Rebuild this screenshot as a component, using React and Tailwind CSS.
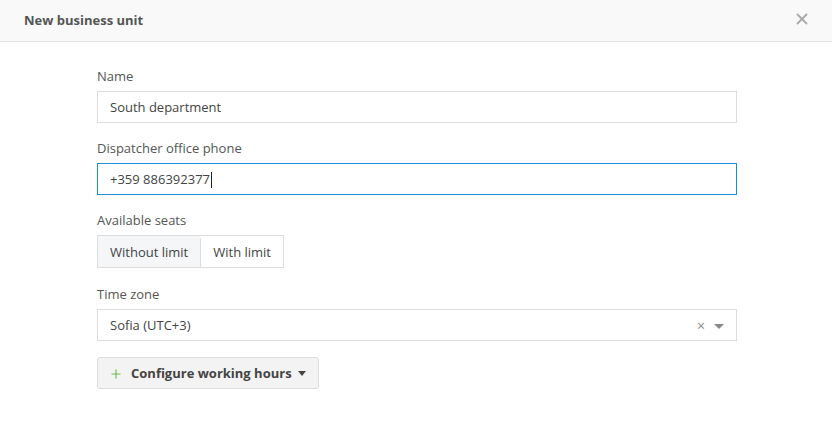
import { X, Plus } from 'lucide-react'

const font = { fontFamily: '"Open Sans", "Liberation Sans", sans-serif' }

function Label({ children }) {
  return <div className="mb-[6px] h-[18px] text-[13px] leading-[18px] text-[#555]">{children}</div>
}

export default function App() {
  return (
    <div className="h-[421px] w-[832px] bg-white" style={font}>
      <div className="flex h-[42px] items-center justify-between border-b border-[#e3e3e3] bg-[#f9f9f9] pl-[24px] pr-[21px]">
        <h1 className="text-[13px] font-bold text-[#555]">New business unit</h1>
        <X size={18} strokeWidth={2.4} className="-mt-[4px] text-[#aaa]" />
      </div>

      <div className="ml-[97px] w-[640px] pt-[25px]">
        <div className="mb-[16px]">
          <Label>Name</Label>
          <div className="flex h-[32px] items-center border border-[#ddd] px-[12px] pt-[2px] text-[13px] text-[#444]">
            South department
          </div>
        </div>

        <div className="mb-[16px]">
          <Label>Dispatcher office phone</Label>
          <div className="flex h-[32px] items-center border border-[#1b8ddb] px-[12px] pt-[2px] text-[13px] text-[#444]">
            +359 886392377
            <span className="ml-[1px] inline-block h-[16px] w-px bg-[#222]" />
          </div>
        </div>

        <div className="mb-[17px]">
          <Label>Available seats</Label>
          <div className="flex h-[33px] w-fit border border-[#ddd] pt-[2px] text-[13px] text-[#444]">
            <div className="-mt-[2px] flex items-center bg-[#f4f6f8] px-[12px] pt-[2px]">Without limit</div>
            <div className="flex items-center border-l border-[#ddd] px-[12px]">With limit</div>
          </div>
        </div>

        <div className="mb-[16px]">
          <Label>Time zone</Label>
          <div className="flex h-[32px] items-center justify-between border border-[#ddd] pl-[12px] pr-[12px] pt-[2px] text-[13px] text-[#444]">
            <span>Sofia (UTC+3)</span>
            <div className="flex items-center gap-[9px] text-[#888]">
              <span className="text-[14px] leading-none">×</span>
              <span className="h-0 w-0 border-x-[5px] border-t-[5px] border-x-transparent border-t-[#888]" />
            </div>
          </div>
        </div>

        <button className="flex h-[32px] items-center rounded-[3px] border border-[#ddd] bg-[#f3f3f3] pl-[11px] pr-[12px] pt-[1px] text-[13px] font-bold text-[#444]">
          <Plus size={14} strokeWidth={2} className="mr-[8px] text-[#6cc04a]" />
          Configure working hours
          <span className="ml-[6px] h-0 w-0 border-x-[4px] border-t-[5px] border-x-transparent border-t-[#444]" />
        </button>
      </div>
    </div>
  )
}
